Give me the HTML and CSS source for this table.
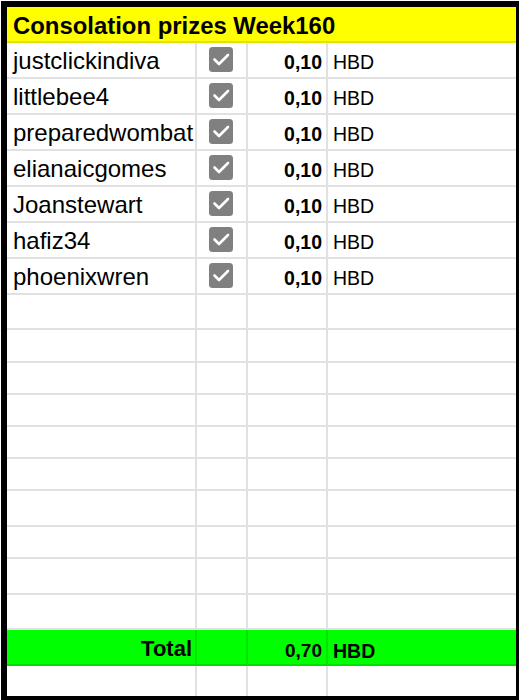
FILE: index.html
```html
<!DOCTYPE html>
<html>
<head>
<meta charset="utf-8">
<link rel="stylesheet" href="styles.css">
</head>
<body>
<div class="sheet">
  <div class="title">Consolation prizes Week160</div>

  <div class="row data"><div class="cell name">justclickindiva</div><div class="cell box"><svg class="chk" viewBox="0 0 24 25"><rect x="0" y="0" width="24" height="25" rx="3.5" fill="#808080"/><polyline points="5.5,12.5 10,17 19,8" fill="none" stroke="#fff" stroke-width="2.6" stroke-linecap="round" stroke-linejoin="round"/></svg></div><div class="cell amt">0,10</div><div class="cell cur">HBD</div></div>
  <div class="row data"><div class="cell name">littlebee4</div><div class="cell box"><svg class="chk" viewBox="0 0 24 25"><rect x="0" y="0" width="24" height="25" rx="3.5" fill="#808080"/><polyline points="5.5,12.5 10,17 19,8" fill="none" stroke="#fff" stroke-width="2.6" stroke-linecap="round" stroke-linejoin="round"/></svg></div><div class="cell amt">0,10</div><div class="cell cur">HBD</div></div>
  <div class="row data"><div class="cell name">preparedwombat</div><div class="cell box"><svg class="chk" viewBox="0 0 24 25"><rect x="0" y="0" width="24" height="25" rx="3.5" fill="#808080"/><polyline points="5.5,12.5 10,17 19,8" fill="none" stroke="#fff" stroke-width="2.6" stroke-linecap="round" stroke-linejoin="round"/></svg></div><div class="cell amt">0,10</div><div class="cell cur">HBD</div></div>
  <div class="row data"><div class="cell name">elianaicgomes</div><div class="cell box"><svg class="chk" viewBox="0 0 24 25"><rect x="0" y="0" width="24" height="25" rx="3.5" fill="#808080"/><polyline points="5.5,12.5 10,17 19,8" fill="none" stroke="#fff" stroke-width="2.6" stroke-linecap="round" stroke-linejoin="round"/></svg></div><div class="cell amt">0,10</div><div class="cell cur">HBD</div></div>
  <div class="row data"><div class="cell name">Joanstewart</div><div class="cell box"><svg class="chk" viewBox="0 0 24 25"><rect x="0" y="0" width="24" height="25" rx="3.5" fill="#808080"/><polyline points="5.5,12.5 10,17 19,8" fill="none" stroke="#fff" stroke-width="2.6" stroke-linecap="round" stroke-linejoin="round"/></svg></div><div class="cell amt">0,10</div><div class="cell cur">HBD</div></div>
  <div class="row data"><div class="cell name">hafiz34</div><div class="cell box"><svg class="chk" viewBox="0 0 24 25"><rect x="0" y="0" width="24" height="25" rx="3.5" fill="#808080"/><polyline points="5.5,12.5 10,17 19,8" fill="none" stroke="#fff" stroke-width="2.6" stroke-linecap="round" stroke-linejoin="round"/></svg></div><div class="cell amt">0,10</div><div class="cell cur">HBD</div></div>
  <div class="row data"><div class="cell name">phoenixwren</div><div class="cell box"><svg class="chk" viewBox="0 0 24 25"><rect x="0" y="0" width="24" height="25" rx="3.5" fill="#808080"/><polyline points="5.5,12.5 10,17 19,8" fill="none" stroke="#fff" stroke-width="2.6" stroke-linecap="round" stroke-linejoin="round"/></svg></div><div class="cell amt">0,10</div><div class="cell cur">HBD</div></div>

  <div class="row h35"><div class="cell"></div><div class="cell"></div><div class="cell"></div><div class="cell"></div></div>
  <div class="row h33"><div class="cell"></div><div class="cell"></div><div class="cell"></div><div class="cell"></div></div>
  <div class="row h32"><div class="cell"></div><div class="cell"></div><div class="cell"></div><div class="cell"></div></div>
  <div class="row h32"><div class="cell"></div><div class="cell"></div><div class="cell"></div><div class="cell"></div></div>
  <div class="row h32"><div class="cell"></div><div class="cell"></div><div class="cell"></div><div class="cell"></div></div>
  <div class="row h32"><div class="cell"></div><div class="cell"></div><div class="cell"></div><div class="cell"></div></div>
  <div class="row h36"><div class="cell"></div><div class="cell"></div><div class="cell"></div><div class="cell"></div></div>
  <div class="row h32"><div class="cell"></div><div class="cell"></div><div class="cell"></div><div class="cell"></div></div>
  <div class="row h36"><div class="cell"></div><div class="cell"></div><div class="cell"></div><div class="cell"></div></div>
  <div class="row h35"><div class="cell"></div><div class="cell"></div><div class="cell"></div><div class="cell"></div></div>

  <div class="row total"><div class="cell tlabel">Total</div><div class="cell"></div><div class="cell amt tamt">0,70</div><div class="cell cur tcur">HBD</div></div>

  <div class="row last"><div class="cell"></div><div class="cell"></div><div class="cell"></div><div class="cell"></div></div>
</div>
</body>
</html>
```

FILE: styles.css
```css
html, body {
  margin: 0;
  padding: 0;
  background: #fff;
  overflow: hidden;
  width: 519px;
  height: 700px;
}

body {
  font-family: "Liberation Sans", Arial, sans-serif;
  color: #000;
}

.sheet {
  box-sizing: border-box;
  margin: 1px 0 0 1px;
  width: 521px;
  height: 701px;
  border: 6px solid #000;
  display: flex;
  flex-direction: column;
  overflow: hidden;
}

.title {
  box-sizing: border-box;
  height: 36px;
  flex: none;
  background: #ffff00;
  border-bottom: 2px solid #e3e300;
  font-weight: bold;
  font-size: 23.9px;
  line-height: 34px;
  padding-top: 2px;
  padding-left: 6px;
  white-space: nowrap;
}

.row {
  display: grid;
  grid-template-columns: 190px 51px 80px 1fr;
  flex: none;
  box-sizing: border-box;
}

.cell {
  box-sizing: border-box;
  border-right: 2px solid #e1e1e1;
  border-bottom: 2px solid #e1e1e1;
  display: flex;
  align-items: center;
  white-space: nowrap;
  overflow: hidden;
}

.cell:last-child {
  border-right: none;
}

.data { height: 36px; }
.h32 { height: 32px; }
.h33 { height: 33px; }
.h35 { height: 35px; }
.h36 { height: 36px; }

.name {
  font-size: 24px;
  padding-left: 6px;
  padding-top: 2px;
}

.box {
  justify-content: center;
}

.chk {
  width: 24px;
  height: 25px;
  display: block;
  margin-top: -1px;
  margin-right: 1px;
}

.amt {
  justify-content: flex-end;
  padding-right: 4px;
  padding-top: 5px;
  font-weight: bold;
  font-size: 19.5px;
}

.cur {
  padding-left: 5px;
  padding-top: 5px;
  font-size: 19.5px;
}

.total {
  height: 36px;
  background: #00ff00;
}

.total .cell {
  border-right-color: #00e400;
  border-bottom-color: #00e000;
}

.tlabel {
  justify-content: flex-end;
  padding-right: 3px;
  padding-top: 4px;
  font-weight: bold;
  font-size: 22px;
}

.tamt {
  font-size: 19px;
  padding-top: 8px;
}

.tcur {
  font-weight: bold;
  font-size: 19.5px;
  padding-top: 8px;
}

.last {
  flex: 1;
}

.last .cell {
  border-bottom: none;
}
```
